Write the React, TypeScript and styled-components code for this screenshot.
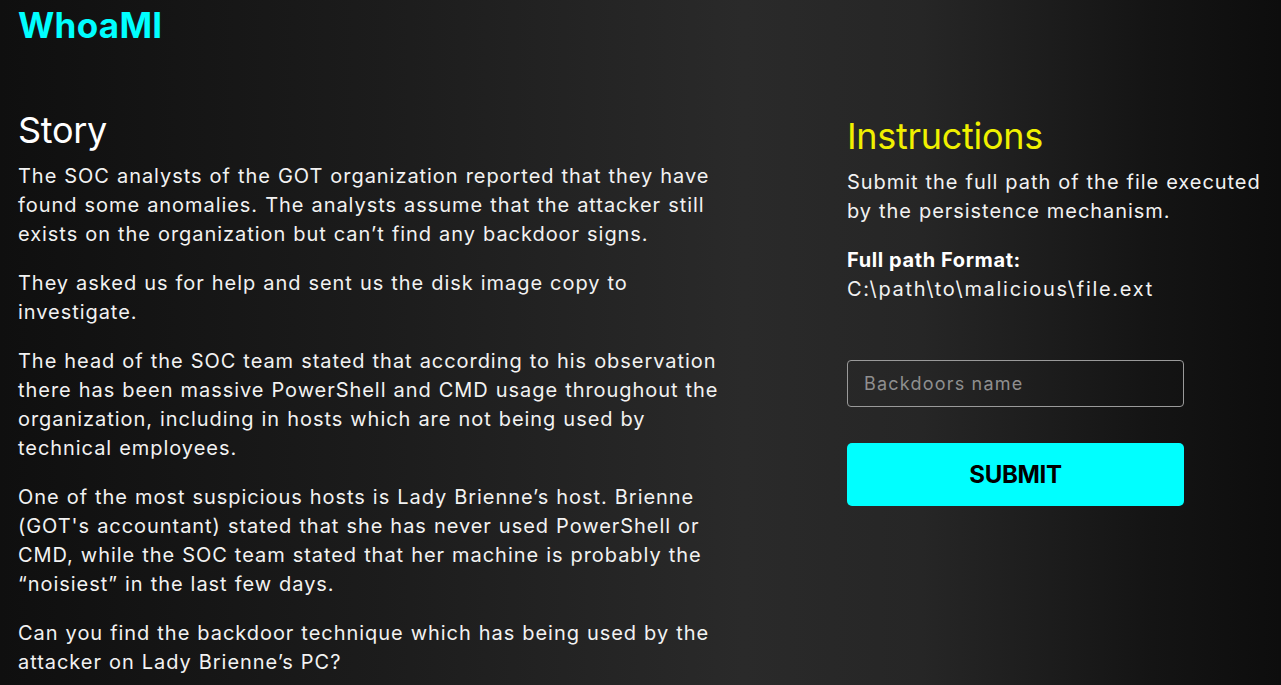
import React from 'react';
import styled, { createGlobalStyle } from 'styled-components';

const GlobalStyle = createGlobalStyle`
  html, body {
    margin: 0;
    padding: 0;
    height: 100%;
  }
  body {
    font-family: Inter, "Liberation Sans", sans-serif;
    color: #ffffff;
    background: #111111;
  }
`;

const Page = styled.div`
  height: 685px;
  overflow: hidden;
  box-sizing: border-box;
  background: linear-gradient(90deg, #0f0f0f 0%, #1c1c1c 30%, #2a2a2a 58%, #262626 72%, #141414 90%, #0d0d0d 100%);
  display: flex;
  flex-direction: column;
`;

const Logo = styled.h1`
  margin: 0;
  padding: 3px 0 0 18px;
  height: 50px;
  line-height: 44px;
  font-size: 35px;
  font-weight: 700;
  color: #00ffff;
  letter-spacing: 0.3px;
`;

const Main = styled.div`
  display: flex;
  padding: 61px 0 0 18px;
`;

const StoryColumn = styled.section`
  width: 760px;
`;

const InstructionsColumn = styled.section`
  margin-left: 69px;
  width: 360px;
  padding-top: 6px;
  white-space: nowrap;
`;

const Heading = styled.h2<{ $color: string; $gap: number }>`
  margin: 0 0 ${p => p.$gap}px;
  font-size: 36px;
  font-weight: 400;
  line-height: 44px;
  color: ${p => p.$color};
  letter-spacing: -0.3px;
`;

const Paragraph = styled.p`
  margin: 0 0 20px;
  font-size: 20px;
  line-height: 29px;
  color: #f2f2f2;
  letter-spacing: 0.95px;
  word-spacing: 0.5px;
`;

const Label = styled.div`
  margin-top: 18px;
  font-size: 20px;
  line-height: 29px;
  font-weight: 700;
  letter-spacing: 0.6px;
`;

const PathText = styled.p`
  margin: 0;
  font-size: 20px;
  line-height: 29px;
  color: #f2f2f2;
  letter-spacing: 1.7px;
`;

const Input = styled.input`
  display: block;
  box-sizing: border-box;
  width: 337px;
  height: 47px;
  margin-top: 56px;
  padding: 0 16px;
  background: transparent;
  border: 1px solid #9a9a9a;
  border-radius: 4px;
  color: #fff;
  font-family: Inter, "Liberation Sans", sans-serif;
  font-size: 18px;
  letter-spacing: 1.2px;
  outline: none;

  &::placeholder {
    color: #8f8f8f;
  }
`;

const SubmitButton = styled.button`
  display: block;
  width: 337px;
  height: 63px;
  margin-top: 36px;
  border: none;
  border-radius: 5px;
  background: #00ffff;
  color: #000;
  font-family: Inter, "Liberation Sans", sans-serif;
  font-size: 24px;
  font-weight: 700;
  letter-spacing: -0.3px;
  cursor: pointer;
`;

export default function App() {
  return (
    <Page>
      <GlobalStyle />
      <Logo>WhoaMI</Logo>
      <Main>
        <StoryColumn>
          <Heading $color="#ffffff" $gap={10}>Story</Heading>
          <Paragraph>
            The SOC analysts of the GOT organization reported that they have<br />
            found some anomalies. The analysts assume that the attacker still<br />
            exists on the organization but can’t find any backdoor signs.
          </Paragraph>
          <Paragraph>
            They asked us for help and sent us the disk image copy to<br />
            investigate.
          </Paragraph>
          <Paragraph>
            The head of the SOC team stated that according to his observation<br />
            there has been massive PowerShell and CMD usage throughout the<br />
            organization, including in hosts which are not being used by<br />
            technical employees.
          </Paragraph>
          <Paragraph>
            One of the most suspicious hosts is Lady Brienne’s host. Brienne<br />
            (GOT's accountant) stated that she has never used PowerShell or<br />
            CMD, while the SOC team stated that her machine is probably the<br />
            “noisiest” in the last few days.
          </Paragraph>
          <Paragraph>
            Can you find the backdoor technique which has being used by the<br />
            attacker on Lady Brienne’s PC?
          </Paragraph>
        </StoryColumn>
        <InstructionsColumn>
          <Heading $color="#f0f000" $gap={10}>Instructions</Heading>
          <Paragraph>
            Submit the full path of the file executed<br />
            by the persistence mechanism.
          </Paragraph>
          <Label>Full path Format:</Label>
          <PathText>C:\path\to\malicious\file.ext</PathText>
          <Input placeholder="Backdoors name" />
          <SubmitButton>SUBMIT</SubmitButton>
        </InstructionsColumn>
      </Main>
    </Page>
  );
}
